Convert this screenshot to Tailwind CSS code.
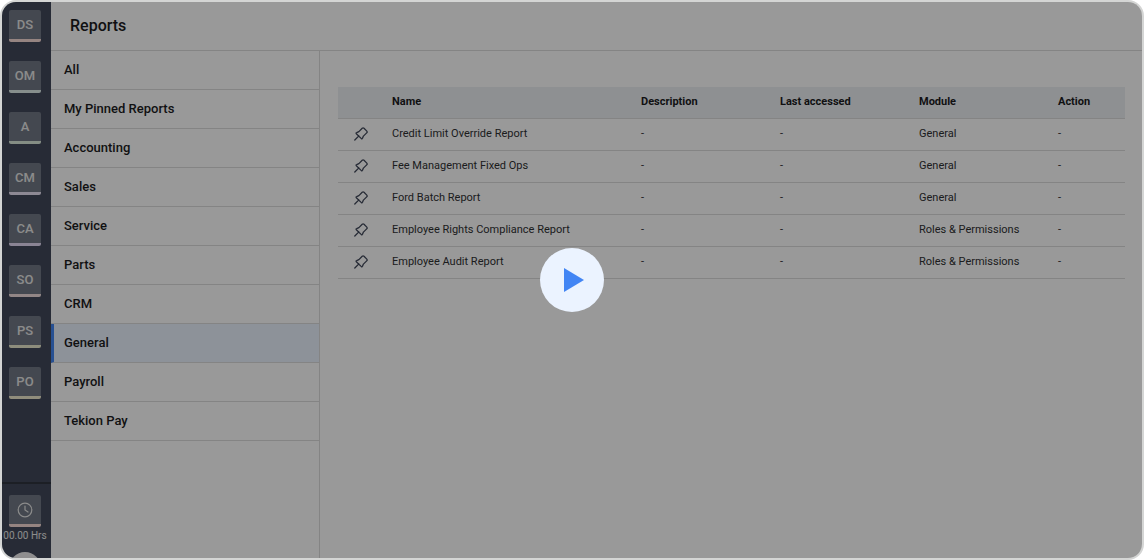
<!DOCTYPE html>
<html lang="en">
<head>
<meta charset="utf-8">
<meta name="viewport" content="width=device-width, initial-scale=1">
<title>Reports</title>
<script src="https://cdn.jsdelivr.net/npm/@tailwindcss/browser@4"></script>
</head>
<body class="bg-white font-['Roboto',sans-serif] text-[#1c1c1e]">
<svg class="hidden" aria-hidden="true">
  <symbol id="pin" viewBox="0 0 14 14"><path d="M.8 13 4.9 8.9M2.3 6.7Q1.8 5.9 2.7 5.6L4.9 4.6 8.2 1.3Q9.1.4 10 1.3L12.8 4.1Q13.6 5 12.7 5.9L9.4 9.1 8.5 11.3Q8.1 12.1 7.4 11.6Z" fill="none" stroke="currentColor" stroke-width="1.3" stroke-linejoin="round" stroke-linecap="round"/></symbol>
</svg>
<div class="relative flex h-screen overflow-hidden rounded-2xl border-2 border-[#d4d5d4]">
  <nav aria-label="Shortcuts" class="flex w-[49px] shrink-0 flex-col bg-[#41485a] text-[13px] font-medium text-[#e8e8e8]">
    <div class="flex flex-col items-center gap-[19px] pt-2 pr-[3px]">
      <button class="h-8 w-8 rounded-xs border-b-3 border-[#f9dcd8] bg-[#727985]">DS</button>
      <button class="h-8 w-8 rounded-xs border-b-3 border-[#dfedea] bg-[#727985]">OM</button>
      <button class="h-8 w-8 rounded-xs border-b-3 border-[#dcebdc] bg-[#727985]">A</button>
      <button class="h-8 w-8 rounded-xs border-b-3 border-[#ece4f7] bg-[#727985]">CM</button>
      <button class="h-8 w-8 rounded-xs border-b-3 border-[#e6dcf7] bg-[#727985]">CA</button>
      <button class="h-8 w-8 rounded-xs border-b-3 border-[#f3dfe0] bg-[#727985]">SO</button>
      <button class="h-8 w-8 rounded-xs border-b-3 border-[#ebebcf] bg-[#727985]">PS</button>
      <button class="h-8 w-8 rounded-xs border-b-3 border-[#f0ebcf] bg-[#727985]">PO</button>
    </div>
    <div class="mt-auto flex h-[76px] flex-col items-center border-t-2 border-[#30353f] pt-[11px] pr-[3px]">
      <button aria-label="Time clock" class="flex h-8 w-8 shrink-0 items-center justify-center rounded-xs border-b-3 border-[#f9dcd8] bg-[#727985]">
        <svg class="size-4" viewBox="0 0 16 16" fill="none" stroke="currentColor" stroke-width="1.2" stroke-linecap="round"><circle cx="8" cy="8" r="6.8"/><path d="M8 4v4l3 2"/></svg>
      </button>
      <span class="mt-[3px] text-[10px] leading-3 font-normal whitespace-nowrap">00.00 Hrs</span>
      <span class="mt-[10px] size-8 shrink-0 rounded-full bg-[#efedef]"></span>
    </div>
  </nav>
  <div class="flex min-w-0 flex-1 flex-col">
    <header class="flex h-[49px] shrink-0 items-center border-b border-[#dcdcdc] px-[19px]">
      <h1 class="text-base font-medium">Reports</h1>
    </header>
    <div class="flex min-h-0 flex-1">
      <aside class="w-[269px] shrink-0 border-r border-[#dcdcdc] text-[13px] font-medium">
        <a href="#" class="flex h-[39px] items-center border-b border-[#dcdcdc] px-[13px]">All</a>
        <a href="#" class="flex h-[39px] items-center border-b border-[#dcdcdc] px-[13px]">My Pinned Reports</a>
        <a href="#" class="flex h-[39px] items-center border-b border-[#dcdcdc] px-[13px]">Accounting</a>
        <a href="#" class="flex h-[39px] items-center border-b border-[#dcdcdc] px-[13px]">Sales</a>
        <a href="#" class="flex h-[39px] items-center border-b border-[#dcdcdc] px-[13px]">Service</a>
        <a href="#" class="flex h-[39px] items-center border-b border-[#dcdcdc] px-[13px]">Parts</a>
        <a href="#" class="flex h-[39px] items-center border-b border-[#dcdcdc] px-[13px]">CRM</a>
        <a href="#" aria-current="page" class="flex h-[39px] items-center border-b border-l-3 border-b-[#dcdcdc] border-l-[#4285f4] bg-[#ebf3ff] px-[10px]">General</a>
        <a href="#" class="flex h-[39px] items-center border-b border-[#dcdcdc] px-[13px]">Payroll</a>
        <a href="#" class="flex h-[39px] items-center border-b border-[#dcdcdc] px-[13px]">Tekion Pay</a>
      </aside>
      <main class="min-w-0 flex-1 pt-9 pr-[17px] pl-[18px]">
        <table class="w-full table-fixed text-left text-[11px]">
          <colgroup><col class="w-[54px]"><col><col class="w-[139px]"><col class="w-[139px]"><col class="w-[139px]"><col class="w-[67px]"></colgroup>
          <thead>
            <tr class="h-[31px] border-b border-[#dcdcdc] bg-[#edf0f4]"><th aria-label="Pin"></th><th class="font-bold">Name</th><th class="font-bold">Description</th><th class="font-bold">Last accessed</th><th class="font-bold">Module</th><th class="font-bold">Action</th></tr>
          </thead>
          <tbody class="text-[#303133]">
            <tr class="h-8 border-b border-[#dcdcdc]"><td class="pl-4"><button aria-label="Pin report" class="block text-[#41485a]"><svg class="size-3.5"><use href="#pin"/></svg></button></td><td>Credit Limit Override Report</td><td>-</td><td>-</td><td>General</td><td>-</td></tr>
            <tr class="h-8 border-b border-[#dcdcdc]"><td class="pl-4"><button aria-label="Pin report" class="block text-[#41485a]"><svg class="size-3.5"><use href="#pin"/></svg></button></td><td>Fee Management Fixed Ops</td><td>-</td><td>-</td><td>General</td><td>-</td></tr>
            <tr class="h-8 border-b border-[#dcdcdc]"><td class="pl-4"><button aria-label="Pin report" class="block text-[#41485a]"><svg class="size-3.5"><use href="#pin"/></svg></button></td><td>Ford Batch Report</td><td>-</td><td>-</td><td>General</td><td>-</td></tr>
            <tr class="h-8 border-b border-[#dcdcdc]"><td class="pl-4"><button aria-label="Pin report" class="block text-[#41485a]"><svg class="size-3.5"><use href="#pin"/></svg></button></td><td>Employee Rights Compliance Report</td><td>-</td><td>-</td><td>Roles &amp; Permissions</td><td>-</td></tr>
            <tr class="h-8 border-b border-[#dcdcdc]"><td class="pl-4"><button aria-label="Pin report" class="block text-[#41485a]"><svg class="size-3.5"><use href="#pin"/></svg></button></td><td>Employee Audit Report</td><td>-</td><td>-</td><td>Roles &amp; Permissions</td><td>-</td></tr>
          </tbody>
        </table>
      </main>
    </div>
  </div>
  <div class="absolute inset-0 flex items-center justify-center bg-black/40">
    <button aria-label="Play video" class="flex size-16 items-center justify-center rounded-full bg-[#ebf3ff]">
      <svg class="ml-1 h-6 w-5" viewBox="0 0 20 24"><path d="M0 0 20 12 0 24Z" fill="#4285f4"/></svg>
    </button>
  </div>
</div>
</body>
</html>
